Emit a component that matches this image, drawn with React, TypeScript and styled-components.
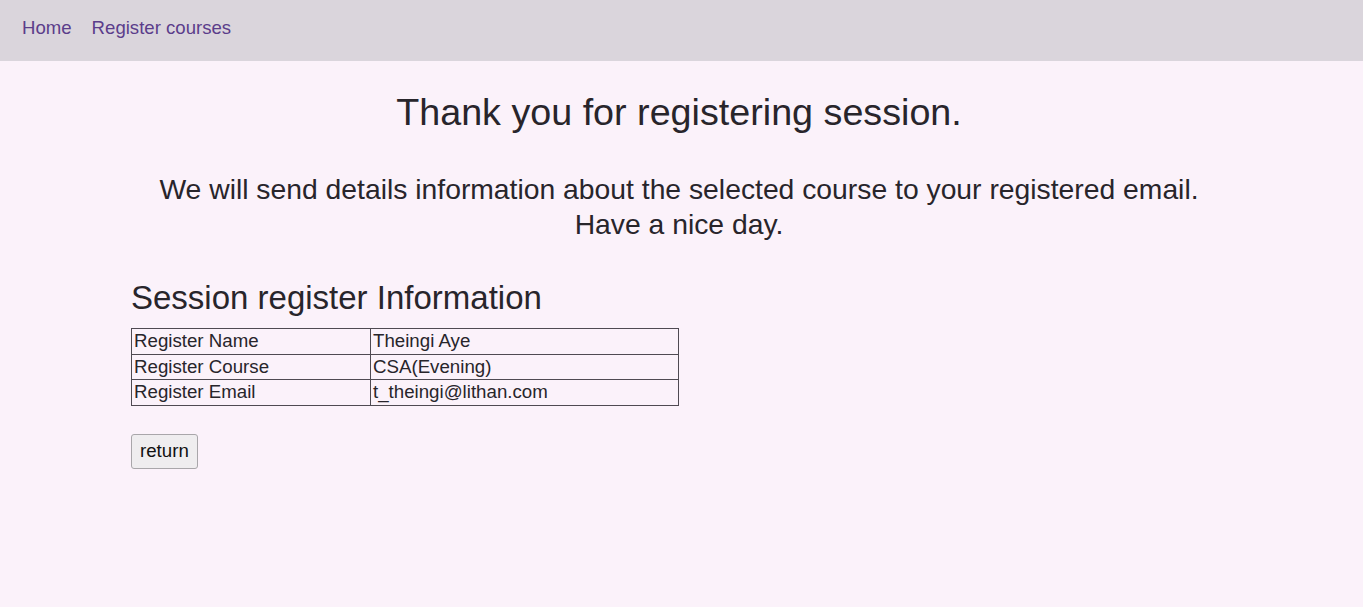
import React from "react";
import styled, { createGlobalStyle } from "styled-components";

const Global = createGlobalStyle`
  html, body { margin: 0; padding: 0; }
  body {
    background: #fbf2fa;
    font-family: "Liberation Sans", Arial, sans-serif;
    color: #28252b;
    min-height: 607px;
  }
`;

const Nav = styled.nav`
  height: 61px;
  background: #dad5dc;
  display: flex;
  align-items: center;
  gap: 20px;
  padding: 0 0 6px 22px;
  box-sizing: border-box;
`;

const NavLink = styled.a`
  font-size: 18.6px;
  color: #5b3d8b;
  text-decoration: none;
`;

const Main = styled.main`
  padding: 0 136px 0 131px;
  display: flex;
  flex-direction: column;
`;

const Title = styled.h1`
  margin: 29px 0 0;
  font-size: 37.7px;
  line-height: 44px;
  font-weight: 400;
  text-align: center;
`;

const Message = styled.p`
  margin: 38px 0 0;
  font-size: 28.3px;
  line-height: 35px;
  text-align: center;
`;

const SectionTitle = styled.h2`
  margin: 37px 0 0;
  font-size: 33px;
  line-height: 38px;
  font-weight: 400;
`;

const Table = styled.table`
  margin-top: 11px;
  width: 548px;
  border-collapse: collapse;
  font-size: 18.7px;
`;

const Cell = styled.td<{ $w?: number }>`
  border: 1px solid #4f4a52;
  padding: 1px 2px;
  line-height: 22.5px;
  width: ${(p) => (p.$w ? `${p.$w}px` : "auto")};
`;

const ReturnButton = styled.button`
  margin-top: 28px;
  align-self: flex-start;
  height: 35px;
  padding: 0 8px;
  font-family: "Liberation Sans", Arial, sans-serif;
  font-size: 18.7px;
  color: #111;
  background: #efedef;
  border: 1px solid #a9a6aa;
  border-radius: 3px;
`;

const rows = [
  ["Register Name", "Theingi Aye"],
  ["Register Course", "CSA(Evening)"],
  ["Register Email", "t_theingi@lithan.com"],
];

export default function App() {
  return (
    <>
      <Global />
      <Nav>
        <NavLink href="#">Home</NavLink>
        <NavLink href="#">Register courses</NavLink>
      </Nav>
      <Main>
        <Title>Thank you for registering session.</Title>
        <Message>
          We will send details information about the selected course to your registered email.
          <br />
          Have a nice day.
        </Message>
        <SectionTitle>Session register Information</SectionTitle>
        <Table>
          <tbody>
            {rows.map(([k, v]) => (
              <tr key={k}>
                <Cell $w={234}>{k}</Cell>
                <Cell>{v}</Cell>
              </tr>
            ))}
          </tbody>
        </Table>
        <ReturnButton>return</ReturnButton>
      </Main>
    </>
  );
}
